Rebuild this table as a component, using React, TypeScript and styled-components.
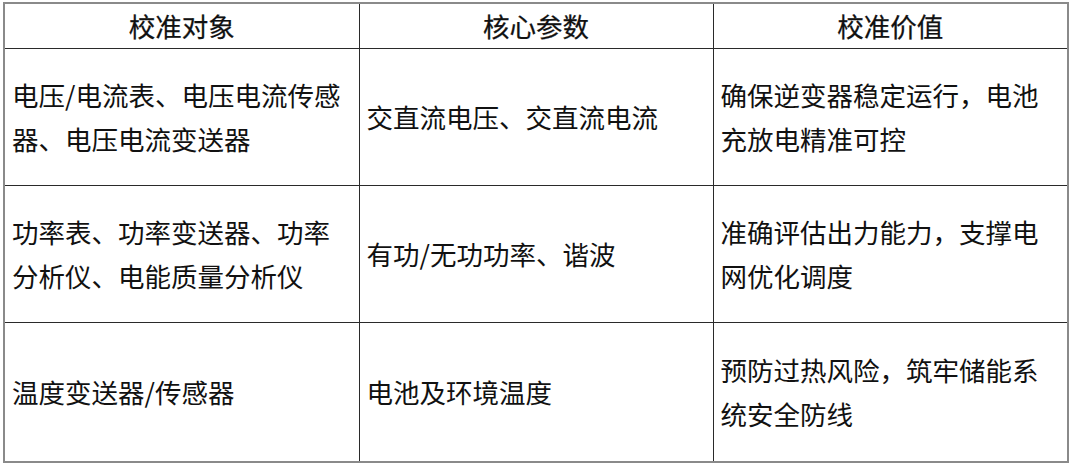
import React from "react";
import styled, { createGlobalStyle } from "styled-components";

const Global = createGlobalStyle`
  html, body { margin: 0; padding: 0; background: #ffffff; }
  body { font-family: "Noto Sans CJK SC", "Noto Sans", sans-serif; color: #111; }
`;

const Page = styled.div`
  padding: 2px 0 0 3px;
`;

const Table = styled.table`
  width: 1064px;
  border-collapse: collapse;
  table-layout: fixed;
  border: 2px solid #8a8a8a;
  font-size: 26.5px;
`;

const HeadCell = styled.th`
  height: 44px;
  padding: 0;
  border: 1.5px solid #2a2a2a;
  font-weight: 400;
  -webkit-text-stroke: 0.25px #111;
  text-align: center;
  vertical-align: middle;
  line-height: 44px;
`;

const Cell = styled.td<{ $h: number }>`
  height: ${(p) => p.$h}px;
  padding: 0 6px 0 7px;
  border: 1.5px solid #2a2a2a;
  text-align: left;
  vertical-align: middle;
  line-height: 44px;
  font-weight: 400;
`;

const Line = styled.span`
  display: block;
  white-space: nowrap;
`;

const rows: { h: number; cells: string[][] }[] = [
  {
    h: 136,
    cells: [
      ["电压/电流表、电压电流传感", "器、电压电流变送器"],
      ["交直流电压、交直流电流"],
      ["确保逆变器稳定运行，电池", "充放电精准可控"],
    ],
  },
  {
    h: 136,
    cells: [
      ["功率表、功率变送器、功率", "分析仪、电能质量分析仪"],
      ["有功/无功功率、谐波"],
      ["准确评估出力能力，支撑电", "网优化调度"],
    ],
  },
  {
    h: 138,
    cells: [
      ["温度变送器/传感器"],
      ["电池及环境温度"],
      ["预防过热风险，筑牢储能系", "统安全防线"],
    ],
  },
];

export default function App() {
  return (
    <Page>
      <Global />
      <Table>
        <colgroup>
          <col style={{ width: 355 }} />
          <col style={{ width: 354 }} />
          <col style={{ width: 355 }} />
        </colgroup>
        <thead>
          <tr>
            <HeadCell>校准对象</HeadCell>
            <HeadCell>核心参数</HeadCell>
            <HeadCell>校准价值</HeadCell>
          </tr>
        </thead>
        <tbody>
          {rows.map((r, i) => (
            <tr key={i}>
              {r.cells.map((c, j) => (
                <Cell key={j} $h={r.h}>
                  {c.map((l, k) => (
                    <Line key={k}>{l}</Line>
                  ))}
                </Cell>
              ))}
            </tr>
          ))}
        </tbody>
      </Table>
    </Page>
  );
}
